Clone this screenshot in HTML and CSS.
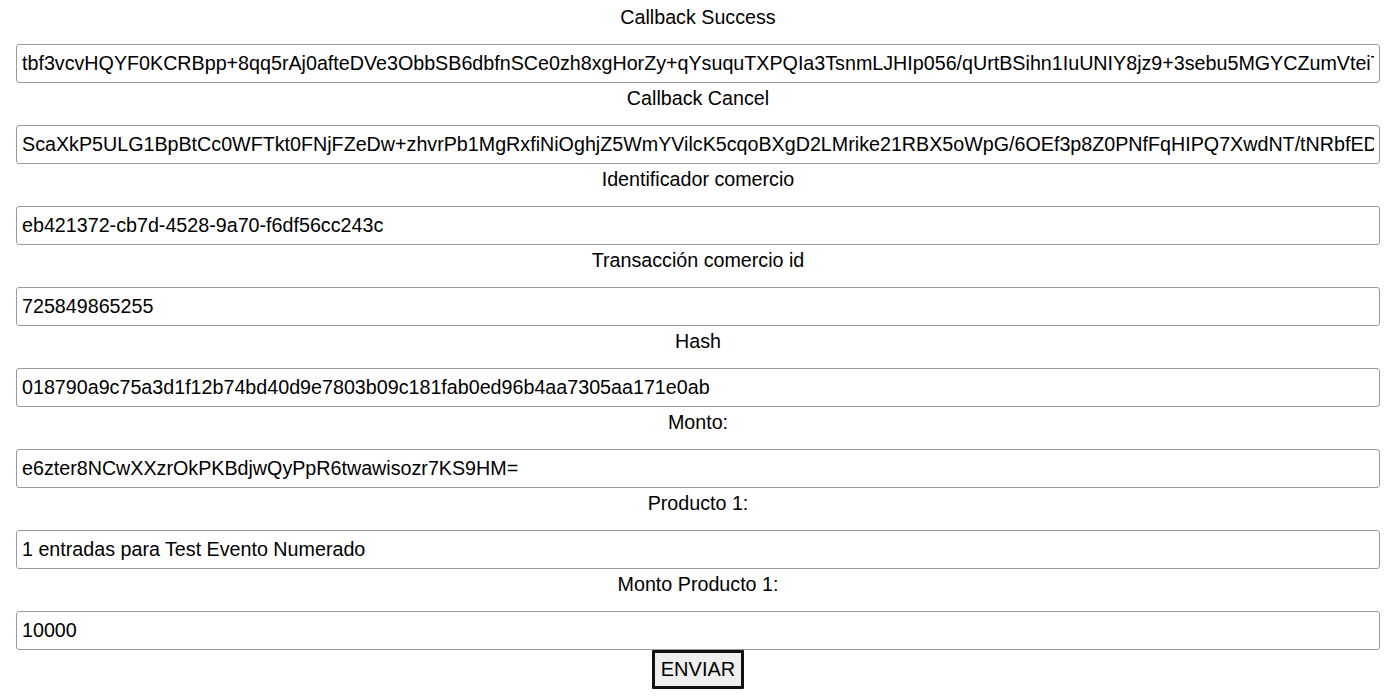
FILE: index.html
```html
<!DOCTYPE html>
<html lang="es">
<head>
<meta charset="utf-8">
<title>Pago</title>
<link rel="stylesheet" href="styles.css">
</head>
<body>
<form class="pay-form">
  <label class="field-label">Callback Success</label>
  <input class="field-input" type="text" value="tbf3vcvHQYF0KCRBpp+8qq5rAj0afteDVe3ObbSB6dbfnSCe0zh8xgHorZy+qYsuquTXPQIa3TsnmLJHIp056/qUrtBSihn1IuUNIY8jz9+3sebu5MGYCZumVteiTq2Lx8Ab3=">
  <label class="field-label">Callback Cancel</label>
  <input class="field-input" type="text" value="ScaXkP5ULG1BpBtCc0WFTkt0FNjFZeDw+zhvrPb1MgRxfiNiOghjZ5WmYVilcK5cqoBXgD2LMrike21RBX5oWpG/6OEf3p8Z0PNfFqHIPQ7XwdNT/tNRbfEDk9Qw2=">
  <label class="field-label">Identificador comercio</label>
  <input class="field-input" type="text" value="eb421372-cb7d-4528-9a70-f6df56cc243c">
  <label class="field-label">Transacción comercio id</label>
  <input class="field-input" type="text" value="725849865255">
  <label class="field-label">Hash</label>
  <input class="field-input" type="text" value="018790a9c75a3d1f12b74bd40d9e7803b09c181fab0ed96b4aa7305aa171e0ab">
  <label class="field-label">Monto:</label>
  <input class="field-input" type="text" value="e6zter8NCwXXzrOkPKBdjwQyPpR6twawisozr7KS9HM=">
  <label class="field-label">Producto 1:</label>
  <input class="field-input" type="text" value="1 entradas para Test Evento Numerado">
  <label class="field-label">Monto Producto 1:</label>
  <input class="field-input" type="text" value="10000">
  <button class="submit-btn" type="button">ENVIAR</button>
</form>
</body>
</html>
```

FILE: styles.css
```css
html, body {
  margin: 0;
  padding: 0;
  background: #ffffff;
}

body {
  font-family: "Liberation Sans", Arial, sans-serif;
  color: #000;
}

.pay-form {
  display: flex;
  flex-direction: column;
  align-items: center;
  padding: 2px 20px 0 16px;
}

.field-label {
  display: block;
  width: 100%;
  text-align: center;
  font-size: 19.7px;
  line-height: 23px;
  padding: 4px 0 15px;
  box-sizing: border-box;
}

.field-input {
  display: block;
  width: 100%;
  height: 39px;
  box-sizing: border-box;
  margin: 0;
  border: 1px solid #9a9a9a;
  border-radius: 3px;
  padding: 0 5px;
  font-family: "Liberation Sans", Arial, sans-serif;
  font-size: 19.7px;
  color: #000;
  background: #fff;
  outline: none;
}

.submit-btn {
  margin: 0;
  width: 92px;
  height: 39px;
  box-sizing: border-box;
  border: 3px solid #111;
  border-radius: 1px;
  background: #efefef;
  font-family: "Liberation Sans", Arial, sans-serif;
  font-size: 20px;
  color: #000;
  padding: 0;
}
```
